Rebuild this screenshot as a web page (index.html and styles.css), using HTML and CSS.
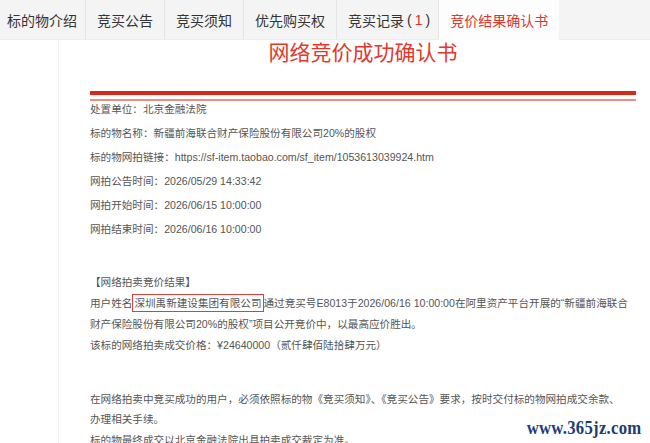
FILE: index.html
```html
<!DOCTYPE html>
<html lang="zh-CN">
<head>
<meta charset="utf-8">
<title>网络竞价成功确认书</title>
<link rel="stylesheet" href="styles.css">
</head>
<body>
<nav class="tabs">
  <a class="tab tab-first">标的物介绍</a>
  <a class="tab">竞买公告</a>
  <a class="tab">竞买须知</a>
  <a class="tab">优先购买权</a>
  <a class="tab tab-record">竞买记录<span class="paren">(</span><span class="count">1</span><span class="paren">)</span></a>
  <a class="tab tab-active">竞价结果确认书</a>
</nav>
<main class="main">
  <h1 class="title">网络竞价成功确认书</h1>
  <div class="rules"></div>
  <div class="info">
    <p>处置单位：北京金融法院</p>
    <p>标的物名称：新疆前海联合财产保险股份有限公司20%的股权</p>
    <p>标的物网拍链接：https://sf-item.taobao.com/sf_item/1053613039924.htm</p>
    <p>网拍公告时间：2026/05/29 14:33:42</p>
    <p>网拍开始时间：2026/06/15 10:00:00</p>
    <p>网拍结束时间：2026/06/16 10:00:00</p>
  </div>
  <div class="result">
    <p class="section-head">【网络拍卖竞价结果】</p>
    <p>用户姓名<span class="mark">深圳禹新建设集团有限公司</span>通过竞买号E8013于2026/06/16 10:00:00在阿里资产平台开展的“新疆前海联合财产保险股份有限公司20%的股权”项目公开竞价中，以最高应价胜出。</p>
    <p>该标的网络拍卖成交价格：¥24640000（贰仟肆佰陆拾肆万元）</p>
  </div>
  <div class="notes">
    <p>在网络拍卖中竞买成功的用户，必须依照标的物《竞买须知》、《竞买公告》要求，按时交付标的物网拍成交余款、办理相关手续。</p>
    <p>标的物最终成交以北京金融法院出具拍卖成交裁定为准。</p>
  </div>
  <div class="watermark">www.365jz.com</div>
</main>
</body>
</html>
```

FILE: styles.css
```css
html, body {
  margin: 0;
  padding: 0;
  background: #fff;
  overflow: hidden;
}

body {
  width: 650px;
  height: 443px;
  font-family: "Liberation Sans", "Noto Sans CJK SC", sans-serif;
  color: #555;
}

/* tab strip */
.tabs {
  display: flex;
  height: 40px;
  background: #f4f4f4;
  border-bottom: 1px solid #ededed;
  box-sizing: border-box;
}

.tab {
  display: flex;
  align-items: center;
  padding: 0 11px;
  font-family: "Noto Sans CJK SC", sans-serif;
  font-size: 14px;
  color: #333;
  border-right: 1px solid #e4e4e4;
  white-space: nowrap;
}

.tab-first {
  padding-left: 7px;
  padding-right: 8px;
}

.tab-record {
  padding-right: 8px;
}

.paren {
  font-family: "Liberation Sans", sans-serif;
  margin-left: 3px;
}

.count {
  color: #d7322c;
  font-family: "Liberation Sans", sans-serif;
  margin-left: 3px;
}

.tab-active {
  background: #fdfdfd;
  color: #e0352e;
  border-right: none;
  margin-bottom: -1px;
}

/* document panel */
.main {
  position: relative;
  margin-left: 58px;
  border-left: 1px solid #efefef;
  padding: 0 14px 0 31px;
  height: 403px;
}

.title {
  margin: 0;
  text-align: center;
  font-family: "Noto Sans CJK SC", sans-serif;
  font-weight: normal;
  font-size: 21px;
  line-height: 22px;
  color: #e2382d;
}

.rules {
  margin-top: 29px;
  height: 4px;
  border-top: 4px solid #d9271c;
  border-bottom: 2px solid #ea8d83;
}

.info {
  margin-top: -4px;
  font-size: 10.6px;
  line-height: 24px;
}

.info p,
.result p,
.notes p {
  margin: 0;
}

.result {
  margin-top: 31px;
  font-size: 10.6px;
  line-height: 21px;
}

.section-head {
  margin-left: -2px;
}

.mark {
  border: 1px solid #d8403a;
  padding: 2px 1px;
}

.notes {
  margin-top: 33px;
  max-width: 535px;
  font-size: 10.6px;
  line-height: 20px;
}

.notes p + p {
  margin-top: 1px;
}

.watermark {
  position: absolute;
  right: 8px;
  bottom: 4px;
  font-family: "Liberation Serif", "DejaVu Serif", serif;
  font-weight: bold;
  font-size: 19px;
  letter-spacing: 0.3px;
  color: #1d3c78;
  transform: scaleX(0.88);
  transform-origin: right bottom;
}
```
